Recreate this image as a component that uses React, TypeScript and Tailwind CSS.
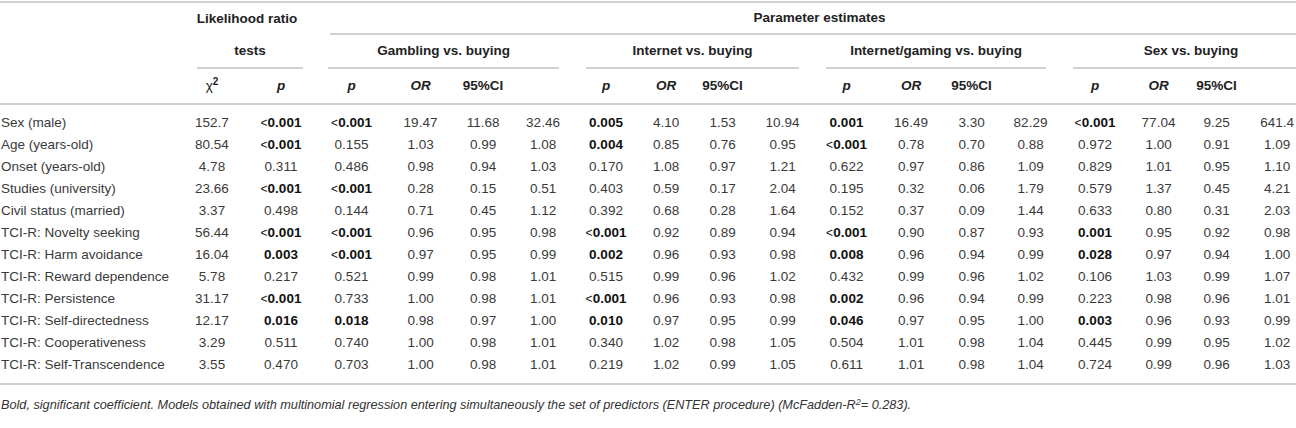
const groups = [
  "Gambling vs. buying",
  "Internet vs. buying",
  "Internet/gaming vs. buying",
  "Sex vs. buying",
];

// column widths in px: label, chi2, p, then 4 groups of p / OR / CI low / CI high
const widths = [
  178, 68, 70, 71, 67, 58, 62, 64, 56, 57, 63, 65, 64, 57, 61, 68, 59, 57, 64,
];

const rows: string[][] = [
  ["Sex (male)", "152.7", "<0.001", "<0.001", "19.47", "11.68", "32.46", "0.005", "4.10", "1.53", "10.94", "0.001", "16.49", "3.30", "82.29", "<0.001", "77.04", "9.25", "641.4"],
  ["Age (years-old)", "80.54", "<0.001", "0.155", "1.03", "0.99", "1.08", "0.004", "0.85", "0.76", "0.95", "<0.001", "0.78", "0.70", "0.88", "0.972", "1.00", "0.91", "1.09"],
  ["Onset (years-old)", "4.78", "0.311", "0.486", "0.98", "0.94", "1.03", "0.170", "1.08", "0.97", "1.21", "0.622", "0.97", "0.86", "1.09", "0.829", "1.01", "0.95", "1.10"],
  ["Studies (university)", "23.66", "<0.001", "<0.001", "0.28", "0.15", "0.51", "0.403", "0.59", "0.17", "2.04", "0.195", "0.32", "0.06", "1.79", "0.579", "1.37", "0.45", "4.21"],
  ["Civil status (married)", "3.37", "0.498", "0.144", "0.71", "0.45", "1.12", "0.392", "0.68", "0.28", "1.64", "0.152", "0.37", "0.09", "1.44", "0.633", "0.80", "0.31", "2.03"],
  ["TCI-R: Novelty seeking", "56.44", "<0.001", "<0.001", "0.96", "0.95", "0.98", "<0.001", "0.92", "0.89", "0.94", "<0.001", "0.90", "0.87", "0.93", "0.001", "0.95", "0.92", "0.98"],
  ["TCI-R: Harm avoidance", "16.04", "0.003", "<0.001", "0.97", "0.95", "0.99", "0.002", "0.96", "0.93", "0.98", "0.008", "0.96", "0.94", "0.99", "0.028", "0.97", "0.94", "1.00"],
  ["TCI-R: Reward dependence", "5.78", "0.217", "0.521", "0.99", "0.98", "1.01", "0.515", "0.99", "0.96", "1.02", "0.432", "0.99", "0.96", "1.02", "0.106", "1.03", "0.99", "1.07"],
  ["TCI-R: Persistence", "31.17", "<0.001", "0.733", "1.00", "0.98", "1.01", "<0.001", "0.96", "0.93", "0.98", "0.002", "0.96", "0.94", "0.99", "0.223", "0.98", "0.96", "1.01"],
  ["TCI-R: Self-directedness", "12.17", "0.016", "0.018", "0.98", "0.97", "1.00", "0.010", "0.97", "0.95", "0.99", "0.046", "0.97", "0.95", "1.00", "0.003", "0.96", "0.93", "0.99"],
  ["TCI-R: Cooperativeness", "3.29", "0.511", "0.740", "1.00", "0.98", "1.01", "0.340", "1.02", "0.98", "1.05", "0.504", "1.01", "0.98", "1.04", "0.445", "0.99", "0.95", "1.02"],
  ["TCI-R: Self-Transcendence", "3.55", "0.470", "0.703", "1.00", "0.98", "1.01", "0.219", "1.02", "0.99", "1.05", "0.611", "1.01", "0.98", "1.04", "0.724", "0.99", "0.96", "1.03"],
];

const pCols = [2, 3, 7, 11, 15];

// significant p values (< 0.05) are printed in bold
const isSignificant = (col: number, value: string) =>
  pCols.includes(col) && (value.startsWith("<") || parseFloat(value) < 0.05);

const Cell = ({ col, value }: { col: number; value: string }) => {
  if (!isSignificant(col, value)) return <>{value}</>;
  if (value.startsWith("<")) {
    return (
      <span className="font-bold text-[#111]">
        <span className="font-normal text-[12px]">&lt;</span>
        {value.slice(1)}
      </span>
    );
  }
  return <span className="font-bold text-[#111]">{value}</span>;
};

const Italic = ({ children }: { children: React.ReactNode }) => (
  <span className="italic">{children}</span>
);

export default function App() {
  const line = "border-[#d0d0d0]";

  return (
    <div className="w-[1296px] h-[428px] overflow-hidden bg-white pt-[1px] font-['Liberation_Sans',Arial,Helvetica,sans-serif] text-[#3a3a3a]">
      <div className={`w-[1296px] border-t-2 ${line}`} />
      <table className="table-fixed border-collapse w-[1309px] text-[13.5px]">
        <colgroup>
          {widths.map((w, i) => (
            <col key={i} style={{ width: w }} />
          ))}
        </colgroup>
        <thead className="font-bold text-[#222]">
          <tr className="h-[32px]">
            <th className="p-0" />
            <th colSpan={2} className="p-0 text-center align-middle">
              Likelihood ratio
            </th>
            <th colSpan={16} className="p-0">
              <div className={`ml-[14px] h-[32px] flex items-center justify-center border-b-2 ${line}`}>
                Parameter estimates
              </div>
            </th>
          </tr>
          <tr className="h-[34px]">
            <th className="p-0" />
            <th colSpan={2} className="p-0">
              <div className={`ml-[19px] mr-[13px] h-[34px] flex items-center justify-center border-b-2 ${line}`}>
                tests
              </div>
            </th>
            {groups.map((g, i) => (
              <th key={g} colSpan={4} className="p-0">
                <div
                  className={`ml-[12px] h-[34px] flex items-center justify-center border-b-2 ${line} ${
                    i === groups.length - 1 ? "mr-0" : "mr-[15px]"
                  }`}
                >
                  {g}
                </div>
              </th>
            ))}
          </tr>
          <tr className={`h-[35px] border-b-2 ${line}`}>
            <th className="p-0" />
            <th className="p-0 text-center">
              <span className="font-normal">χ</span>
              <sup className="text-[10px] font-bold">2</sup>
            </th>
            <th className="p-0 text-center">
              <Italic>p</Italic>
            </th>
            {groups.map((g) => [
              <th key={g + "p"} className="p-0 text-center">
                <Italic>p</Italic>
              </th>,
              <th key={g + "or"} className="p-0 text-center">
                <Italic>OR</Italic>
              </th>,
              <th key={g + "ci"} className="p-0 text-center">
                95%CI
              </th>,
              <th key={g + "ci2"} className="p-0" />,
            ])}
          </tr>
        </thead>
        <tbody>
          <tr className="h-[8px]">
            <td colSpan={19} className="p-0" />
          </tr>
          {rows.map((row) => (
            <tr key={row[0]} className="h-[22px]">
              {row.map((value, col) =>
                col === 0 ? (
                  <td key={col} className="p-0 pl-[1px] text-left whitespace-nowrap">
                    {value}
                  </td>
                ) : (
                  <td key={col} className="p-0 text-center whitespace-nowrap">
                    <Cell col={col} value={value} />
                  </td>
                )
              )}
            </tr>
          ))}
          <tr className={`h-[8px] border-b-2 ${line}`}>
            <td colSpan={19} className="p-0" />
          </tr>
        </tbody>
      </table>
      <p className="mt-[11px] pl-[1px] text-[12.7px] italic text-[#333] whitespace-nowrap">
        Bold, significant coefficient. Models obtained with multinomial regression entering
        simultaneously the set of predictors (ENTER procedure) (McFadden-R
        <sup className="text-[9px]">2</sup>= 0.283).
      </p>
    </div>
  );
}
